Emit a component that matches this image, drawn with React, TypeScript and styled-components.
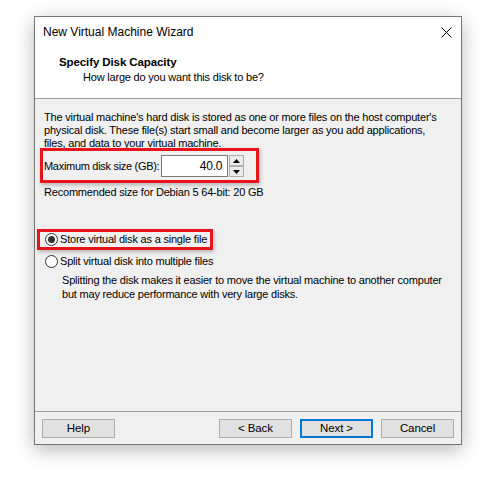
import React from "react"
import styled, { createGlobalStyle } from "styled-components"

const GlobalStyle = createGlobalStyle`
  html, body {
    margin: 0;
    padding: 0;
    background: #fff;
  }
  body {
    font-family: "Liberation Sans", Arial, sans-serif;
    font-size: 11px;
    letter-spacing: -0.2px;
    color: #000;
  }
`

const Page = styled.div`
  padding: 16px 0 0 34px;
  height: 478px;
  box-sizing: border-box;
`

const Window = styled.div`
  width: 428px;
  height: 429px;
  box-sizing: border-box;
  border: 1px solid #777;
  background: #f0f0f0;
  display: flex;
  flex-direction: column;
  box-shadow: 0 5px 18px rgba(0, 0, 0, 0.28);
`

const TitleBar = styled.div`
  height: 30px;
  background: #fff;
  display: flex;
  align-items: center;
  justify-content: space-between;
  padding-left: 8px;
`

const TitleText = styled.span`
  font-size: 12px;
  letter-spacing: 0;
  line-height: 30px;
`

const CloseBox = styled.div`
  width: 30px;
  height: 30px;
  display: flex;
  align-items: center;
  justify-content: center;
`

const Header = styled.div`
  background: #fff;
  padding: 8px 0 13px 24px;
  border-bottom: 1px solid #a0a0a0;
`

const HeaderTitle = styled.div`
  font-weight: bold;
  font-size: 11.5px;
  letter-spacing: -0.1px;
  line-height: 15px;
`

const HeaderSub = styled.div`
  line-height: 15px;
  padding-left: 24px;
`

const Body = styled.div`
  flex: 1;
  padding: 12px 9px 0 9px;
  display: flex;
  flex-direction: column;
  align-items: flex-start;
`

const Text = styled.p<{ $indent?: number; $lh?: number; $mt?: number }>`
  margin: ${({ $mt }) => $mt ?? 0}px 0 0 0;
  padding-left: ${({ $indent }) => $indent ?? 0}px;
  line-height: ${({ $lh }) => $lh ?? 13}px;
  white-space: nowrap;
`

const Highlight = styled.div<{ $mt: number; $ml: number; $pad: string }>`
  display: inline-flex;
  align-items: center;
  border: 3px solid #e8141c;
  margin: ${({ $mt }) => $mt}px 0 0 ${({ $ml }) => $ml}px;
  padding: ${({ $pad }) => $pad};
  box-shadow: 1px 2px 4px rgba(0, 0, 0, 0.25);
`

const FieldLabel = styled.span`
  line-height: 15px;
  letter-spacing: -0.3px;
  margin-right: 2px;
`

const NumberBox = styled.div`
  width: 67px;
  height: 22px;
  box-sizing: border-box;
  border: 1px solid #7a7a7a;
  background: #fff;
  display: flex;
  align-items: center;
  justify-content: flex-end;
  padding-right: 5px;
  font-size: 12px;
`

const Spinner = styled.div`
  display: flex;
  flex-direction: column;
  margin-left: 1px;
  height: 22px;
  justify-content: space-between;
`

const SpinButton = styled.div`
  width: 15px;
  height: 11px;
  box-sizing: border-box;
  border: 1px solid #adadad;
  background: #ececec;
  display: flex;
  align-items: center;
  justify-content: center;
`

const RadioRow = styled.label<{ $mt?: number; $ml?: number }>`
  display: flex;
  align-items: center;
  line-height: 15px;
  white-space: nowrap;
  margin: ${({ $mt }) => $mt ?? 0}px 0 0 ${({ $ml }) => $ml ?? 0}px;
`

const RadioCircle = styled.span<{ $checked?: boolean }>`
  width: 13px;
  height: 13px;
  box-sizing: border-box;
  border: 1px solid #333;
  border-radius: 50%;
  background: #fff;
  margin-right: 2px;
  display: flex;
  align-items: center;
  justify-content: center;
  &::after {
    content: "";
    width: 7px;
    height: 7px;
    border-radius: 50%;
    background: ${({ $checked }) => ($checked ? "#333" : "transparent")};
  }
`

const Footer = styled.div`
  border-top: 1px solid #a0a0a0;
  padding: 7px 7px 6px 7px;
  display: flex;
  gap: 8px;
`

const Spacer = styled.div`
  flex: 1;
`

const Button = styled.button<{ $default?: boolean }>`
  width: 73px;
  height: 19px;
  box-sizing: border-box;
  border: ${({ $default }) => ($default ? "2px solid #0078d7" : "1px solid #adadad")};
  background: #e1e1e1;
  font-family: "Liberation Sans", Arial, sans-serif;
  font-size: 11.5px;
  letter-spacing: -0.1px;
  color: #000;
  padding: 0;
  line-height: 15px;
`

export default function App() {
  return (
    <Page>
      <GlobalStyle />
      <Window>
        <TitleBar>
          <TitleText>New Virtual Machine Wizard</TitleText>
          <CloseBox>
            <svg width="11" height="11" viewBox="0 0 11 11">
              <path d="M0.5 0.5 L10.5 10.5 M10.5 0.5 L0.5 10.5" stroke="#000" strokeWidth="1" />
            </svg>
          </CloseBox>
        </TitleBar>
        <Header>
          <HeaderTitle>Specify Disk Capacity</HeaderTitle>
          <HeaderSub>How large do you want this disk to be?</HeaderSub>
        </Header>
        <Body>
          <Text>
            The virtual machine's hard disk is stored as one or more files on the host computer's
            <br />
            physical disk. These file(s) start small and become larger as you add applications,
            <br />
            files, and data to your virtual machine.
          </Text>
          <Highlight $mt={-2} $ml={-4} $pad="4px 12px 3px 1px">
            <FieldLabel>Maximum disk size (GB):</FieldLabel>
            <NumberBox>40.0</NumberBox>
            <Spinner>
              <SpinButton>
                <svg width="7" height="4" viewBox="0 0 7 4">
                  <path d="M3.5 0 L7 4 L0 4 Z" fill="#000" />
                </svg>
              </SpinButton>
              <SpinButton>
                <svg width="7" height="4" viewBox="0 0 7 4">
                  <path d="M0 0 L7 0 L3.5 4 Z" fill="#000" />
                </svg>
              </SpinButton>
            </Spinner>
          </Highlight>
          <Text $mt={3}>Recommended size for Debian 5 64-bit: 20 GB</Text>
          <Highlight $mt={30} $ml={-7} $pad="0 3px 0 5px">
            <RadioRow>
              <RadioCircle $checked />
              Store virtual disk as a single file
            </RadioRow>
          </Highlight>
          <RadioRow $mt={4} $ml={1}>
            <RadioCircle />
            Split virtual disk into multiple files
          </RadioRow>
          <Text $mt={4} $lh={14} $indent={18}>
            Splitting the disk makes it easier to move the virtual machine to another computer
            <br />
            but may reduce performance with very large disks.
          </Text>
        </Body>
        <Footer>
          <Button>Help</Button>
          <Spacer />
          <Button>&lt; Back</Button>
          <Button $default>Next &gt;</Button>
          <Button>Cancel</Button>
        </Footer>
      </Window>
    </Page>
  )
}
